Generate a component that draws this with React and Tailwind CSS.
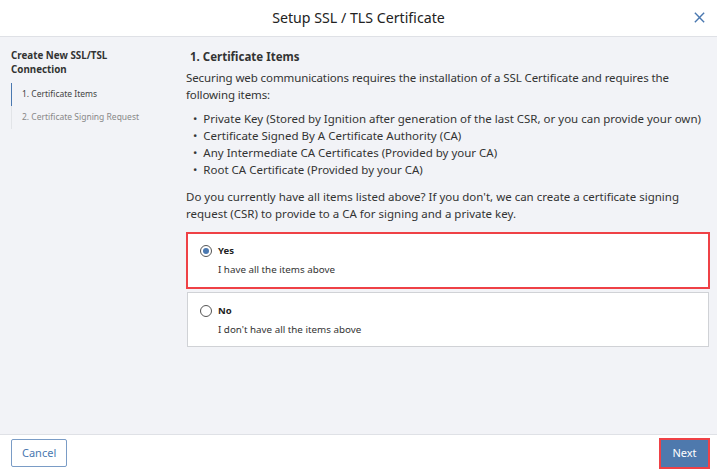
import React, { useState } from 'react';

const Radio = ({ checked }) => (
  <span className="w-[12px] h-[12px] rounded-full border border-[#555] bg-white flex items-center justify-center shrink-0">
    {checked && <span className="w-[6px] h-[6px] rounded-full bg-[#4a78b0]" />}
  </span>
);

const Choice = ({ checked, title, sub, onClick }) => (
  <button
    onClick={onClick}
    className={`text-left bg-white flex flex-col ${
      checked
        ? 'w-full border-2 border-[#ef4146] h-[57px] pt-[10px] pl-[12px]'
        : 'mx-[1px] w-[calc(100%-2px)] border border-[#d0d2d6] h-[55px] pt-[11px] pl-[12px]'
    }`}
  >
    <div className="flex items-center gap-[6px] h-[14px]">
      <Radio checked={checked} />
      <span className="text-[9.5px] font-bold text-[#222]">{title}</span>
    </div>
    <div className="text-[9.8px] text-[#333] pl-[18px] mt-[5px]">{sub}</div>
  </button>
);

export default function App() {
  const [answer, setAnswer] = useState('yes');
  const items = [
    'Private Key (Stored by Ignition after generation of the last CSR, or you can provide your own)',
    'Certificate Signed By A Certificate Authority (CA)',
    'Any Intermediate CA Certificates (Provided by your CA)',
    'Root CA Certificate (Provided by your CA)',
  ];

  return (
    <div className="h-screen w-full flex flex-col bg-white text-[#333] font-['Noto_Sans',sans-serif]">
      <header className="h-[37px] border-b border-[#dfe1e6] flex items-center justify-center relative shrink-0">
        <h1 className="text-[14.2px] text-[#222]">Setup SSL / TLS Certificate</h1>
        <button className="absolute right-[11px] top-[11px] text-[#4a78b0]">
          <svg width="13" height="13" viewBox="0 0 14 14" fill="none" stroke="currentColor" strokeWidth="1.5">
            <path d="M2 2L12 12M12 2L2 12" />
          </svg>
        </button>
      </header>

      <div className="flex-1 bg-[#f2f3f7] flex">
        <aside className="w-[176px] shrink-0 pl-[11px] pt-[12px]">
          <div className="text-[9.8px] font-bold leading-[14px] text-[#333]">
            Create New SSL/TSL
            <br />
            Connection
          </div>
          <nav className="mt-[6px] border-l border-[#e2e4e8] flex flex-col">
            <div className="border-l border-[#4a78b0] -ml-px h-[23px] flex items-center pl-[10px] text-[8.5px] text-[#444]">
              1. Certificate Items
            </div>
            <div className="h-[23px] flex items-center pl-[10px] text-[8.5px] text-[#888]">
              2. Certificate Signing Request
            </div>
          </nav>
        </aside>

        <main className="flex-1 pl-[10px] pr-[7px] pt-[11px]">
          <h2 className="text-[11.5px] font-bold text-[#333] pl-[4px] leading-[17px]">1. Certificate Items</h2>
          <p className="text-[11.5px] tracking-[-0.1px] leading-[17px] mt-[4px] text-[#333] pr-[30px]">
            Securing web communications requires the installation of a SSL Certificate and requires the following items:
          </p>
          <ul className="mt-[7px] text-[11.5px] leading-[17px]">
            {items.map((t) => (
              <li key={t} className="flex gap-[6px] pl-[7px]">
                <span>•</span>
                <span>{t}</span>
              </li>
            ))}
          </ul>
          <p className="text-[11.5px] leading-[17px] mt-[10px]">
            Do you currently have all items listed above? If you don't, we can create a certificate signing request (CSR) to provide to a CA for signing and a private key.
          </p>
          <div className="mt-[10px] flex flex-col gap-[3px]">
            <Choice checked={answer === 'yes'} title="Yes" sub="I have all the items above" onClick={() => setAnswer('yes')} />
            <Choice checked={answer === 'no'} title="No" sub="I don't have all the items above" onClick={() => setAnswer('no')} />
          </div>
        </main>
      </div>

      <footer className="h-[37px] border-t border-[#dfe1e6] flex items-center justify-between px-[11px] shrink-0">
        <button className="h-[28px] px-[10px] border border-[#7a9cc6] rounded-[2px] text-[11px] text-[#4a78b0] bg-white">
          Cancel
        </button>
        <button className="h-[31px] w-[51px] border-2 border-[#ef4146] bg-[#4e79ad] text-[11px] text-white -mr-[4px]">
          Next
        </button>
      </footer>
    </div>
  );
}
